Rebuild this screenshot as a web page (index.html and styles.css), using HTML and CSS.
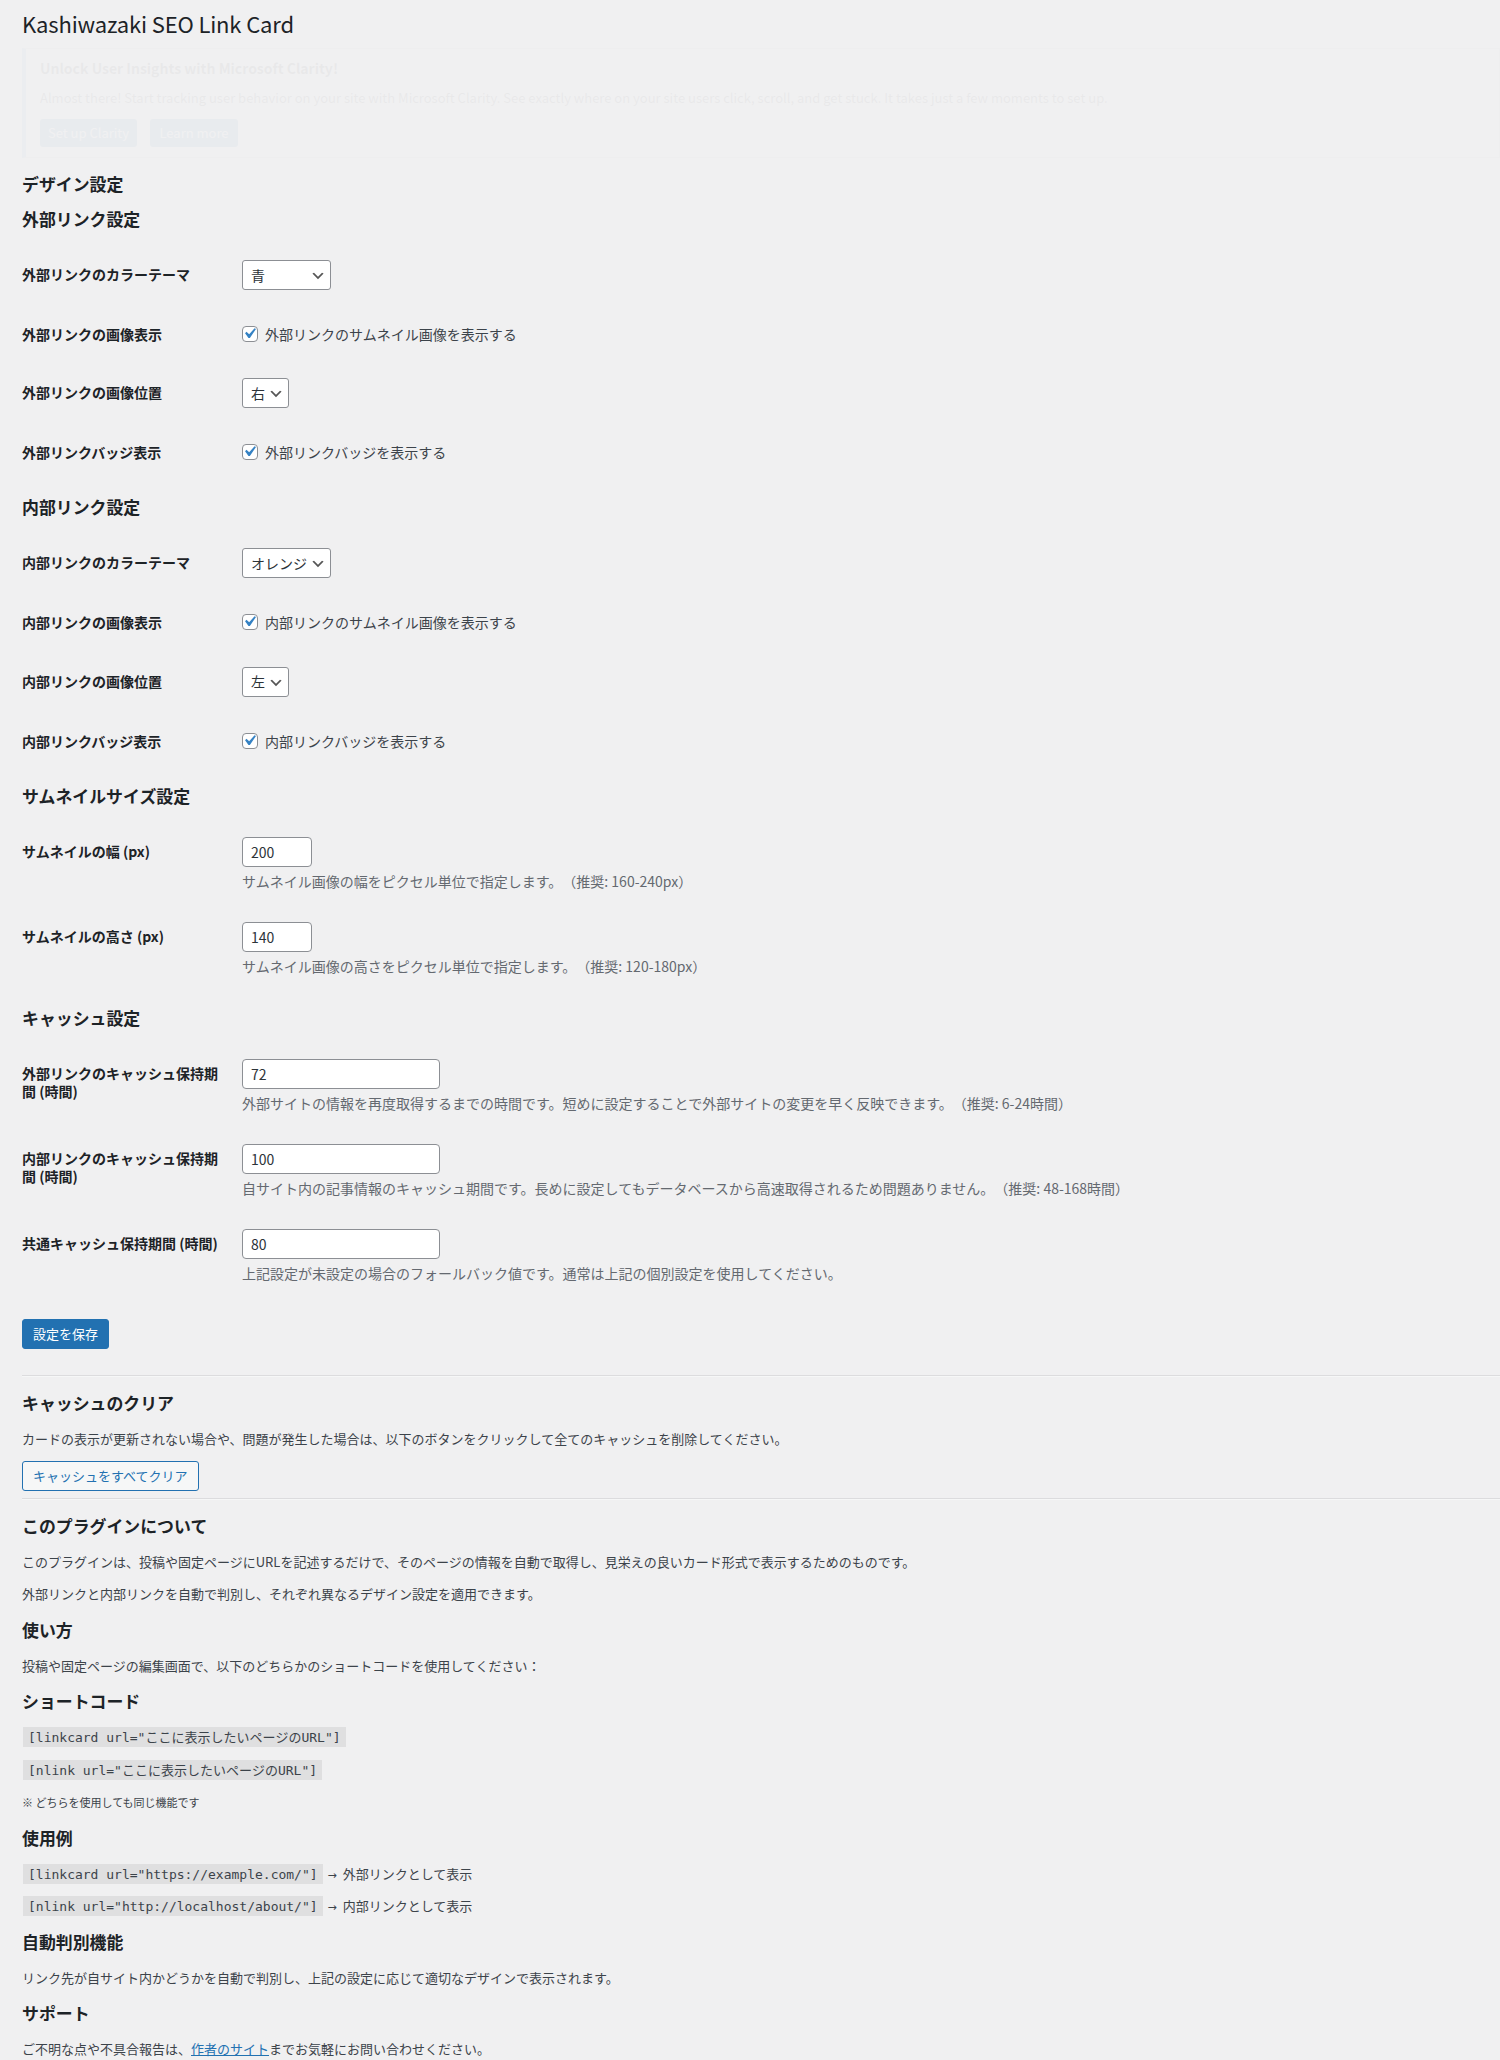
FILE: index.html
```html
<!DOCTYPE html>
<html lang="ja">
<head>
<meta charset="utf-8">
<title>Kashiwazaki SEO Link Card</title>
<link rel="stylesheet" href="styles.css">
</head>
<body>
<div class="wrap">
  <h1 class="page-title">Kashiwazaki SEO Link Card</h1>

  <div class="notice">
    <p class="notice-title">Unlock User Insights with Microsoft Clarity!</p>
    <p class="notice-text">Almost there! Start tracking user behavior on your site with Microsoft Clarity. See exactly where on your site users click, scroll, and get stuck. It takes just a few moments to set up.</p>
    <div class="notice-actions">
      <span class="notice-btn notice-btn-a">Set up Clarity</span>
      <span class="notice-btn notice-btn-b">Learn more</span>
    </div>
  </div>

  <form class="settings">
    <h2 class="heading">デザイン設定</h2>
    <h3 class="heading">外部リンク設定</h3>
    <table class="form-table">
      <tr>
        <th>外部リンクのカラーテーマ</th>
        <td><span class="select select-theme"><span class="select-value">青</span><svg class="chevron" viewBox="0 0 20 20" width="16" height="16"><path d="M5 6l5 5 5-5 2 1-7 7-7-7 2-1z" fill="#555"/></svg></span></td>
      </tr>
      <tr>
        <th>外部リンクの画像表示</th>
        <td><label class="check"><span class="checkbox"><svg viewBox="0 0 20 20" width="21" height="21"><path d="M14.83 4.89l1.34.94-5.81 8.38H9.02L5.78 9.67l1.34-1.25 2.57 2.4z" fill="#3582c4"/></svg></span>外部リンクのサムネイル画像を表示する</label></td>
      </tr>
      <tr>
        <th>外部リンクの画像位置</th>
        <td><span class="select select-pos"><span class="select-value">右</span><svg class="chevron" viewBox="0 0 20 20" width="16" height="16"><path d="M5 6l5 5 5-5 2 1-7 7-7-7 2-1z" fill="#555"/></svg></span></td>
      </tr>
      <tr>
        <th>外部リンクバッジ表示</th>
        <td><label class="check"><span class="checkbox"><svg viewBox="0 0 20 20" width="21" height="21"><path d="M14.83 4.89l1.34.94-5.81 8.38H9.02L5.78 9.67l1.34-1.25 2.57 2.4z" fill="#3582c4"/></svg></span>外部リンクバッジを表示する</label></td>
      </tr>
    </table>

    <h3 class="heading">内部リンク設定</h3>
    <table class="form-table">
      <tr>
        <th>内部リンクのカラーテーマ</th>
        <td><span class="select select-theme"><span class="select-value">オレンジ</span><svg class="chevron" viewBox="0 0 20 20" width="16" height="16"><path d="M5 6l5 5 5-5 2 1-7 7-7-7 2-1z" fill="#555"/></svg></span></td>
      </tr>
      <tr>
        <th>内部リンクの画像表示</th>
        <td><label class="check"><span class="checkbox"><svg viewBox="0 0 20 20" width="21" height="21"><path d="M14.83 4.89l1.34.94-5.81 8.38H9.02L5.78 9.67l1.34-1.25 2.57 2.4z" fill="#3582c4"/></svg></span>内部リンクのサムネイル画像を表示する</label></td>
      </tr>
      <tr>
        <th>内部リンクの画像位置</th>
        <td><span class="select select-pos"><span class="select-value">左</span><svg class="chevron" viewBox="0 0 20 20" width="16" height="16"><path d="M5 6l5 5 5-5 2 1-7 7-7-7 2-1z" fill="#555"/></svg></span></td>
      </tr>
      <tr>
        <th>内部リンクバッジ表示</th>
        <td><label class="check"><span class="checkbox"><svg viewBox="0 0 20 20" width="21" height="21"><path d="M14.83 4.89l1.34.94-5.81 8.38H9.02L5.78 9.67l1.34-1.25 2.57 2.4z" fill="#3582c4"/></svg></span>内部リンクバッジを表示する</label></td>
      </tr>
    </table>

    <h3 class="heading">サムネイルサイズ設定</h3>
    <table class="form-table">
      <tr>
        <th>サムネイルの幅 (px)</th>
        <td><span class="input input-small">200</span><p class="description">サムネイル画像の幅をピクセル単位で指定します。（推奨: 160-240px）</p></td>
      </tr>
      <tr>
        <th>サムネイルの高さ (px)</th>
        <td><span class="input input-small">140</span><p class="description">サムネイル画像の高さをピクセル単位で指定します。（推奨: 120-180px）</p></td>
      </tr>
    </table>

    <h3 class="heading">キャッシュ設定</h3>
    <table class="form-table">
      <tr>
        <th>外部リンクのキャッシュ保持期間 (時間)</th>
        <td><span class="input input-medium">72</span><p class="description">外部サイトの情報を再度取得するまでの時間です。短めに設定することで外部サイトの変更を早く反映できます。（推奨: 6-24時間）</p></td>
      </tr>
      <tr>
        <th>内部リンクのキャッシュ保持期間 (時間)</th>
        <td><span class="input input-medium">100</span><p class="description">自サイト内の記事情報のキャッシュ期間です。長めに設定してもデータベースから高速取得されるため問題ありません。（推奨: 48-168時間）</p></td>
      </tr>
      <tr>
        <th>共通キャッシュ保持期間 (時間)</th>
        <td><span class="input input-medium">80</span><p class="description">上記設定が未設定の場合のフォールバック値です。通常は上記の個別設定を使用してください。</p></td>
      </tr>
    </table>

    <p class="submit"><span class="button button-primary">設定を保存</span></p>
  </form>

  <hr class="divider">

  <h2 class="heading">キャッシュのクリア</h2>
  <p class="text">カードの表示が更新されない場合や、問題が発生した場合は、以下のボタンをクリックして全てのキャッシュを削除してください。</p>
  <div class="clear-form"><span class="button button-secondary">キャッシュをすべてクリア</span></div>

  <hr class="divider">

  <div class="about">
    <h2 class="heading">このプラグインについて</h2>
    <p class="text">このプラグインは、投稿や固定ページにURLを記述するだけで、そのページの情報を自動で取得し、見栄えの良いカード形式で表示するためのものです。</p>
    <p class="text">外部リンクと内部リンクを自動で判別し、それぞれ異なるデザイン設定を適用できます。</p>

    <h3 class="heading">使い方</h3>
    <p class="text">投稿や固定ページの編集画面で、以下のどちらかのショートコードを使用してください：</p>

    <h3 class="heading">ショートコード</h3>
    <p class="text"><code class="code">[linkcard url="ここに表示したいページのURL"]</code></p>
    <p class="text"><code class="code">[nlink url="ここに表示したいページのURL"]</code></p>
    <p class="text"><small class="note">※ どちらを使用しても同じ機能です</small></p>

    <h3 class="heading">使用例</h3>
    <p class="text"><code class="code">[linkcard url="https://example.com/"]</code> <span class="arrow">→</span> 外部リンクとして表示</p>
    <p class="text"><code class="code">[nlink url="http://localhost/about/"]</code> <span class="arrow">→</span> 内部リンクとして表示</p>

    <h3 class="heading">自動判別機能</h3>
    <p class="text">リンク先が自サイト内かどうかを自動で判別し、上記の設定に応じて適切なデザインで表示されます。</p>

    <h3 class="heading">サポート</h3>
    <p class="text">ご不明な点や不具合報告は、<a class="link" href="#">作者のサイト</a>までお気軽にお問い合わせください。</p>
  </div>
</div>
</body>
</html>
```

FILE: styles.css
```css
html, body {
  margin: 0;
  padding: 0;
}

body {
  background: #f0f0f1;
  color: #3c434a;
  font-family: "Noto Sans CJK JP", "Noto Sans", sans-serif;
  font-size: 13px;
  line-height: 1.4em;
  overflow: hidden;
  text-spacing-trim: space-all;
}

.wrap {
  margin: 0 0 0 22px;
}

.page-title {
  font-size: 22px;
  letter-spacing: -0.15px;
  font-weight: 400;
  line-height: 29.9px;
  margin: 0;
  padding: 9px 0 4px;
  color: #1d2327;
}

/* faint (nearly transparent) notice */
.notice {
  margin: 5px 0 15px;
  background: #fff;
  border: 1px solid #c3c4c7;
  border-left: 4px solid #72aee6;
  padding: 0 12px 0 14px;
  height: 108px;
  opacity: 0.03;
}

.notice-title {
  margin: 9px 0 0;
  font-size: 14px;
  font-weight: 700;
  line-height: 20px;
  color: #1d2327;
}

.notice-text {
  margin: 10px 0 0;
  font-size: 13px;
  line-height: 20px;
  white-space: nowrap;
  color: #1d2327;
}

.notice-actions {
  display: flex;
  gap: 13px;
  margin-top: 11px;
}

.notice-btn {
  display: flex;
  align-items: center;
  justify-content: center;
  height: 28px;
  border-radius: 3px;
  background: #2271b1;
  color: #fff;
  font-size: 13px;
}

.notice-btn-a { width: 97px; }
.notice-btn-b { width: 88px; }

.heading {
  font-size: 1.3em;
  font-weight: 700;
  margin: 1em 0;
  color: #1d2327;
}

.form-table {
  border-collapse: collapse;
  width: 100%;
  margin-top: 0.5em;
}

.form-table th {
  width: 200px;
  padding: 20px 10px 20px 0;
  text-align: left;
  vertical-align: top;
  font-size: 14px;
  font-weight: 700;
  line-height: 1.3;
  color: #1d2327;
}

.form-table td {
  padding: 15px 10px;
  font-size: 14px;
  line-height: 1.3;
  vertical-align: middle;
}

.select {
  display: flex;
  align-items: center;
  justify-content: space-between;
  box-sizing: border-box;
  height: 30px;
  padding: 0 4px 0 8px;
  background: #fff;
  border: 1px solid #8c8f94;
  border-radius: 3px;
  color: #2c3338;
  font-size: 14px;
}

.select-theme { width: 89px; }
.select-pos { width: 47px; }

.chevron {
  flex: none;
  margin-top: 2px;
}

.check {
  display: flex;
  align-items: center;
  gap: 7px;
  color: #3c434a;
}

.checkbox {
  position: relative;
  flex: none;
  box-sizing: border-box;
  width: 16px;
  height: 16px;
  border: 1px solid #8c8f94;
  border-radius: 4px;
  background: #fff;
}

.checkbox svg {
  position: absolute;
  left: -4px;
  top: -4px;
}

.input {
  display: flex;
  align-items: center;
  box-sizing: border-box;
  height: 30px;
  padding: 0 8px;
  background: #fff;
  border: 1px solid #8c8f94;
  border-radius: 4px;
  color: #2c3338;
  font-size: 14px;
}

.input-small { width: 70px; }
.input-medium { width: 198px; }

.description {
  margin: 4px 0 0;
  font-size: 14px;
  line-height: 1.5;
  color: #646970;
}

.submit {
  display: flex;
  margin: 20px 0 0;
  padding: 0 0 19.5px;
}

.button {
  display: inline-flex;
  align-items: center;
  box-sizing: border-box;
  height: 30px;
  padding: 0 10px;
  border: 1px solid #2271b1;
  border-radius: 3px;
  font-size: 13px;
}

.button-primary {
  background: #2271b1;
  color: #fff;
}

.button-secondary {
  background: #f6f7f7;
  color: #2271b1;
}

.divider {
  border: 0;
  border-top: 1px solid #dcdcde;
  border-bottom: 1px solid #f6f7f7;
  margin: 6.5px 0;
}

.text {
  margin: 1em 0;
  font-size: 13px;
  line-height: 19.5px;
}

.clear-form {
  display: flex;
}

.code {
  padding: 3px 5px 2px;
  margin: 0 1px;
  background: rgba(0, 0, 0, 0.07);
  font-family: "DejaVu Sans Mono", "Noto Sans Mono CJK JP", "Noto Sans CJK JP", monospace;
  font-size: 13px;
  line-height: 1;
}

.note {
  font-size: 11px;
  line-height: 1;
}

.arrow {
  display: inline-block;
  margin: 0 3px 0 1px;
  font-family: "DejaVu Sans", sans-serif;
  font-size: 11px;
  line-height: 1;
}

.link {
  color: #2271b1;
  text-decoration: underline;
}
```
